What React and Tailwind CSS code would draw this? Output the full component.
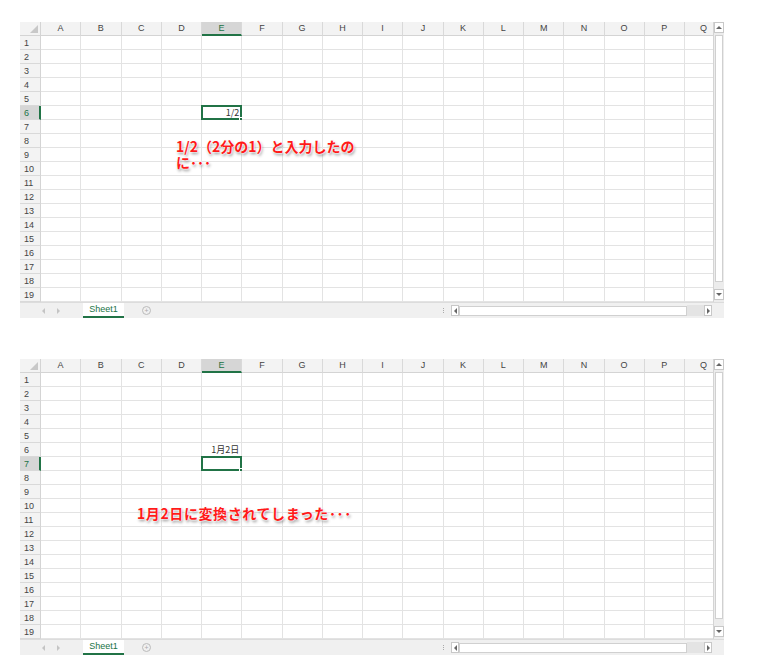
import React from 'react';

const COLS = ['A','B','C','D','E','F','G','H','I','J','K','L','M','N','O','P'];
const ROWS = Array.from({ length: 19 }, (_, i) => i + 1);
const jp = { fontFamily: '"Noto Sans CJK JP", "Noto Sans", sans-serif' };
const lat = { fontFamily: '"Liberation Sans", sans-serif' };

function Cell({ value, selected, last }) {
  return (
    <div className={`relative h-[14px] shrink-0 border-b border-r border-[#e3e3e3] ${last ? 'w-[28px] border-r-0' : 'w-[40.25px]'}`}>
      {value && (
        <span className="absolute right-[2px] top-0 text-[9px] leading-[14px] text-[#333]" style={jp}>{value}</span>
      )}
      {selected && (
        <div className="absolute -left-px -top-px w-[41.25px] h-[15px] border-2 border-[#217346]">
          <div className="absolute -right-[3px] -bottom-[3px] w-[4px] h-[4px] bg-[#217346] border border-white" />
        </div>
      )}
    </div>
  );
}

function Sheet({ selRow, values, note }) {
  return (
    <div className="relative w-[704px]">
      <div className="flex">
        <div className="w-[693px]">
          <div className="flex h-[14px] bg-[#f3f3f3]">
            <div className="w-[21px] h-[14px] border-r border-b border-[#d4d4d4] relative">
              <div className="absolute right-[2px] bottom-[2px] w-0 h-0 border-l-[8px] border-l-transparent border-b-[8px] border-b-[#c8c8c8]" />
            </div>
            {COLS.map((c) => (
              <div key={c} className={`w-[40.25px] shrink-0 h-[14px] border-r border-[#d9d9d9] text-center text-[9px] leading-[13px] ${c === 'E' ? 'bg-[#d6d6d6] text-[#217346] border-b-2 border-b-[#217346]' : 'text-[#444] border-b border-b-[#d4d4d4]'}`} style={lat}>
                {c}
              </div>
            ))}
            <div className="w-[28px] h-[14px] border-b border-[#d4d4d4] text-right pr-[6px] text-[9px] leading-[13px] text-[#444]" style={lat}>Q</div>
          </div>
          {ROWS.map((r) => (
            <div key={r} className="flex h-[14px]">
              <div className={`w-[21px] shrink-0 h-[14px] border-b border-[#d9d9d9] pl-[4px] text-[9px] leading-[14px] ${r === selRow ? 'bg-[#d6d6d6] text-[#217346] border-r-2 border-r-[#217346]' : 'bg-[#f3f3f3] text-[#444] border-r border-r-[#d4d4d4]'}`} style={lat}>
                {r}
              </div>
              {COLS.map((c) => (
                <Cell key={c} value={values[`${c}${r}`]} selected={c === 'E' && r === selRow} />
              ))}
              <Cell last />
            </div>
          ))}
        </div>
        <div className="w-[11px] h-[280px] bg-[#ececec] border-l border-[#d4d4d4] flex flex-col items-center">
          <div className="w-[10px] h-[11px] bg-white border border-[#c8c8c8] flex items-center justify-center">
            <div className="w-0 h-0 border-l-[3px] border-r-[3px] border-b-[3px] border-l-transparent border-r-transparent border-b-[#666]" />
          </div>
          <div className="w-[8px] h-[247px] mt-[2px] bg-white border border-[#d0d0d0]" />
          <div className="flex-1" />
          <div className="w-[10px] h-[11px] bg-white border border-[#c8c8c8] flex items-center justify-center mb-[2px]">
            <div className="w-0 h-0 border-l-[3px] border-r-[3px] border-t-[3px] border-l-transparent border-r-transparent border-t-[#666]" />
          </div>
        </div>
      </div>
      <div className="flex items-center h-[16px] bg-[#f0f0f0] border-t border-[#dcdcdc]">
        <div className="ml-[22px] w-0 h-0 border-t-[3px] border-b-[3px] border-r-[3px] border-t-transparent border-b-transparent border-r-[#c4c4c4]" />
        <div className="ml-[12px] w-0 h-0 border-t-[3px] border-b-[3px] border-l-[3px] border-t-transparent border-b-transparent border-l-[#c4c4c4]" />
        <div className="ml-[23px] w-[41px] h-[15px] bg-white border-b-2 border-[#217346] text-center text-[9px] leading-[13px] text-[#217346]" style={lat}>
          Sheet1
        </div>
        <div className="ml-[18px] w-[9px] h-[9px] rounded-full border border-[#bbb] flex items-center justify-center text-[7px] leading-none text-[#aaa]">+</div>
        <div className="ml-[292px] flex flex-col gap-[1px]">
          <div className="w-[1px] h-[1px] bg-[#aaa]" />
          <div className="w-[1px] h-[1px] bg-[#aaa]" />
          <div className="w-[1px] h-[1px] bg-[#aaa]" />
        </div>
        <div className="ml-[7px] flex items-center h-[11px] w-[261px]">
          <div className="w-[8px] h-[11px] bg-white border border-[#c8c8c8] flex items-center justify-center">
            <div className="w-0 h-0 border-t-[3px] border-b-[3px] border-r-[3px] border-t-transparent border-b-transparent border-r-[#666]" />
          </div>
          <div className="w-[228px] h-[10px] bg-white border border-[#d0d0d0]" />
          <div className="flex-1 h-[11px] bg-[#e4e4e4]" />
          <div className="w-[8px] h-[11px] bg-white border border-[#c8c8c8] flex items-center justify-center">
            <div className="w-0 h-0 border-t-[3px] border-b-[3px] border-l-[3px] border-t-transparent border-b-transparent border-l-[#666]" />
          </div>
        </div>
      </div>
      <div className={`absolute text-[#ff1a1a] font-bold text-[14px] leading-[16px] [text-shadow:0_0_1px_#fff,0_0_2px_#fff,0_0_2px_#fff,1px_2px_3px_rgba(0,0,0,0.45)] ${note.wide ? 'tracking-[0.6px]' : ''}`} style={{ ...jp, left: note.left, top: note.top }}>
        {note.lines.map((l, i) => <div key={i} className="whitespace-nowrap">{l}</div>)}
      </div>
    </div>
  );
}

export default function App() {
  return (
    <div className="w-[759px] h-[665px] bg-white pl-[20px] pt-[22px]">
      <Sheet
        selRow={6}
        values={{ E6: '1/2' }}
        note={{ left: 156, top: 116, lines: ['1/2（2分の1）と入力したの', 'に･･･'] }}
      />
      <div className="h-[41px]" />
      <Sheet
        selRow={7}
        values={{ E6: '1月2日' }}
        note={{ left: 117, top: 146, wide: true, lines: ['1月2日に変換されてしまった･･･'] }}
      />
    </div>
  );
}
